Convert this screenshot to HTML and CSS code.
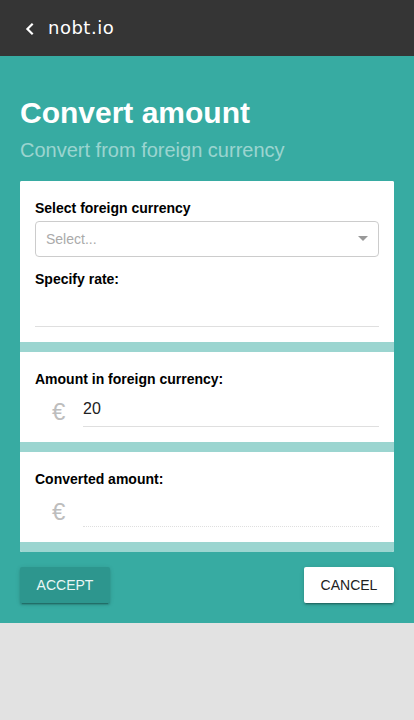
FILE: index.html
```html
<!DOCTYPE html>
<html lang="en">
<head>
<meta charset="utf-8">
<title>nobt.io</title>
<link rel="stylesheet" href="styles.css">
</head>
<body>
<header class="header">
  <svg class="back" width="24" height="24" viewBox="0 0 24 24"><path d="M14.7 6.7L9.4 12l5.3 5.3"/></svg>
  <span class="brand">nobt.io</span>
</header>
<main class="page">
  <h1 class="title">Convert amount</h1>
  <h2 class="subtitle">Convert from foreign currency</h2>
  <div class="card">
    <section class="section section-rate">
      <label class="label">Select foreign currency</label>
      <div class="select"><span>Select...</span><i class="arrow"></i></div>
      <label class="label label-rate">Specify rate:</label>
      <div class="field"></div>
    </section>
    <section class="section">
      <label class="label">Amount in foreign currency:</label>
      <div class="row"><span class="symbol">€</span><div class="field">20</div></div>
    </section>
    <section class="section">
      <label class="label">Converted amount:</label>
      <div class="row"><span class="symbol">€</span><div class="field field-disabled"></div></div>
    </section>
  </div>
  <div class="actions">
    <button class="button accept">ACCEPT</button>
    <button class="button cancel">CANCEL</button>
  </div>
</main>
</body>
</html>
```
FILE: styles.css
```css
* { box-sizing: border-box; }
body {
  margin: 0;
  background: #e2e2e2;
  font-family: "Liberation Sans", Arial, sans-serif;
  color: #000;
}
.header {
  height: 56px;
  padding: 2px 18px 0;
  display: flex;
  align-items: center;
  background: #353535;
  color: #fff;
}
.back {
  fill: none;
  stroke: #fff;
  stroke-width: 2.2;
}
.brand {
  margin: -2px 0 0 6px;
  font: 400 18px/24px "DejaVu Sans", sans-serif;
  letter-spacing: 0.5px;
}
.page {
  height: 567px;
  padding: 39px 20px 20px;
  background: #37aba2;
}
.title {
  margin: 0;
  font-size: 30px;
  line-height: 36px;
  color: #fff;
}
.subtitle {
  margin: 7px 0 0;
  font-size: 20px;
  font-weight: 400;
  line-height: 24px;
  color: rgba(255, 255, 255, 0.5);
}
.card {
  margin-top: 19px;
  border-radius: 2px;
  overflow: hidden;
  background: linear-gradient(#fff 50%, #9bd5d0 50%);
}
.section {
  height: 100px;
  padding: 19px 15px 0;
  border-bottom: 10px solid #9bd5d0;
  background: #fff;
}
.section-rate { height: 171px; }
.label {
  display: block;
  font-size: 14px;
  font-weight: 700;
  line-height: 16px;
}
.select {
  height: 36px;
  margin-top: 5px;
  padding: 0 10px;
  display: flex;
  align-items: center;
  justify-content: space-between;
  border: 1px solid #ccc;
  border-radius: 4px;
  font-size: 14px;
  color: #aaa;
}
.arrow {
  margin-bottom: 2px;
  border: 5px solid transparent;
  border-top-color: #999;
  border-bottom-width: 0;
}
.label-rate { margin-top: 14px; }
.field {
  flex: 1;
  height: 40px;
  border-bottom: 1px solid #dfdfdf;
  font-size: 16px;
  line-height: 43px;
  color: #212121;
}
.row { display: flex; }
.row .field { line-height: 44px; }
.symbol {
  width: 48px;
  padding-left: 17px;
  font-size: 24px;
  line-height: 50px;
  height: 40px;
  color: #bdbdbd;
}
.row .field-disabled { border-bottom-style: dotted; }
.actions {
  margin-top: 15px;
  display: flex;
  justify-content: space-between;
}
.button {
  width: 90px;
  height: 36px;
  padding: 0;
  border: 0;
  border-radius: 2px;
  font: 14px "Liberation Sans", Arial, sans-serif;
  box-shadow: 0 2px 2px rgba(0, 0, 0, 0.14), 0 3px 1px -2px rgba(0, 0, 0, 0.2), 0 1px 5px rgba(0, 0, 0, 0.12);
}
.accept { background: #2d968e; color: #e9f6f5; }
.cancel { background: #fff; color: #212121; }
```
